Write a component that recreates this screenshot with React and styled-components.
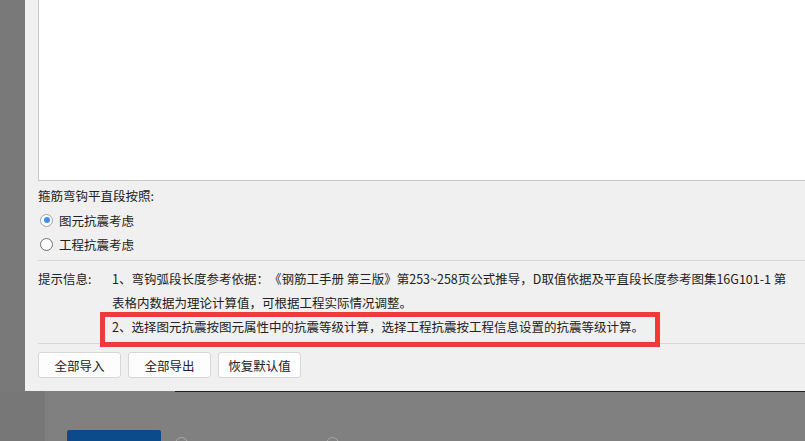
import React from "react";
import styled, { createGlobalStyle } from "styled-components";

const GlobalStyle = createGlobalStyle`
  body {
    margin: 0;
    background: #808080;
    overflow: hidden;
    font-family: "Noto Sans CJK SC", "Noto Sans", sans-serif;
    text-spacing-trim: space-all;
  }
`;

const hintLines = [
  "1、弯钩弧段长度参考依据：《钢筋工手册 第三版》第253~258页公式推导，D取值依据及平直段长度参考图集16G101-1 第",
  "表格内数据为理论计算值，可根据工程实际情况调整。",
  "2、选择图元抗震按图元属性中的抗震等级计算，选择工程抗震按工程信息设置的抗震等级计算。",
];

function App() {
  return (
    <>
      <GlobalStyle />
      <Page>
        <TopRow>
          <Strip $width={25} $color="#797979" />
          <Dialog>
            <TextBox />
            <Heading>箍筋弯钩平直段按照:</Heading>
            <RadioGroup>
              <RadioRow>
                <Radio $checked />
                图元抗震考虑
              </RadioRow>
              <RadioRow>
                <Radio />
                工程抗震考虑
              </RadioRow>
            </RadioGroup>
            <Divider $top={4} />
            <HintBlock>
              <HintLabel>提示信息:</HintLabel>
              <HintList>
                {hintLines.map((line, idx) => (
                  <HintLine key={idx}>
                    {line}
                    {idx === 2 && <Highlight />}
                  </HintLine>
                ))}
              </HintList>
            </HintBlock>
            <Divider $top={4} />
            <ButtonRow>
              <Button>全部导入</Button>
              <Button>全部导出</Button>
              <Button>恢复默认值</Button>
            </ButtonRow>
          </Dialog>
        </TopRow>
        <BottomRow>
          <Strip $width={45} $color="#777777" />
          <Backdrop>
            <BlueButton />
            <GhostRadio />
            <GhostRadio $gap={138} />
          </Backdrop>
        </BottomRow>
      </Page>
    </>
  );
}

const Page = styled.div`
  width: 805px;
  height: 441px;
  overflow: hidden;
  display: flex;
  flex-direction: column;
`;
const TopRow = styled.div`
  display: flex;
  height: 391px;
  flex-shrink: 0;
`;
const Strip = styled.div`
  width: ${(p) => p.$width}px;
  flex-shrink: 0;
  background: ${(p) => p.$color};
`;
const Dialog = styled.div`
  flex: 1;
  background: #f0f0f0;
  padding-left: 13px;
  display: flex;
  flex-direction: column;
  font-size: 12.5px;
  color: #222;
  overflow: hidden;
`;
const TextBox = styled.div`
  height: 180px;
  flex-shrink: 0;
  background: #fff;
  border-left: 1px solid #c9c9c9;
  border-bottom: 1px solid #c9c9c9;
`;
const Heading = styled.div`
  margin-top: 5px;
  height: 20px;
  line-height: 20px;
`;
const RadioGroup = styled.div`
  margin-top: 2px;
  display: flex;
  flex-direction: column;
`;
const RadioRow = styled.label`
  display: flex;
  align-items: center;
  gap: 6px;
  height: 24px;
  padding-left: 2px;
`;
const Radio = styled.span`
  width: 13px;
  height: 13px;
  box-sizing: border-box;
  border-radius: 50%;
  background: #fff;
  border: 1px solid ${(p) => (p.$checked ? "#9aa3ad" : "#6f6f6f")};
  display: flex;
  align-items: center;
  justify-content: center;
  &::after {
    content: "";
    width: 6px;
    height: 6px;
    border-radius: 50%;
    background: ${(p) => (p.$checked ? "#3f8fe6" : "transparent")};
  }
`;
const Divider = styled.div`
  margin-top: ${(p) => p.$top}px;
  height: 1px;
  flex-shrink: 0;
  background: #d8d8d8;
`;
const HintBlock = styled.div`
  margin-top: 6px;
  display: flex;
`;
const HintLabel = styled.div`
  width: 74px;
  flex-shrink: 0;
  line-height: 24px;
`;
const HintList = styled.div`
  display: flex;
  flex-direction: column;
  white-space: nowrap;
`;
const HintLine = styled.div`
  position: relative;
  height: 24px;
  line-height: 24px;
`;
const Highlight = styled.span`
  position: absolute;
  left: -12px;
  top: -3px;
  width: 560px;
  height: 35px;
  box-sizing: border-box;
  border: 5px solid #f03a3a;
  pointer-events: none;
`;
const ButtonRow = styled.div`
  margin-top: 8px;
  display: flex;
  gap: 7px;
`;
const Button = styled.button`
  width: 83px;
  height: 26px;
  flex-shrink: 0;
  background: #fdfdfd;
  border: 1px solid #d7d7d7;
  border-radius: 3px;
  font-family: inherit;
  font-size: 12.5px;
  color: #222;
  padding: 0;
`;
const BottomRow = styled.div`
  flex: 1;
  min-height: 0;
  overflow: hidden;
  display: flex;
`;
const Backdrop = styled.div`
  flex: 1;
  background: linear-gradient(#1e1e1e, #1e1e1e) no-repeat 130px 0 / 100% 1px,
    #808080;
  padding: 39px 0 0 22px;
  display: flex;
  align-items: flex-start;
`;
const BlueButton = styled.div`
  width: 94px;
  height: 30px;
  flex-shrink: 0;
  background: #0b4a8b;
  border-radius: 2px;
`;
const GhostRadio = styled.div`
  margin: 7px 0 0 ${(p) => p.$gap || 14}px;
  width: 11px;
  height: 11px;
  flex-shrink: 0;
  border-radius: 50%;
  border: 1px solid #a9a9a9;
`;

export default App;
